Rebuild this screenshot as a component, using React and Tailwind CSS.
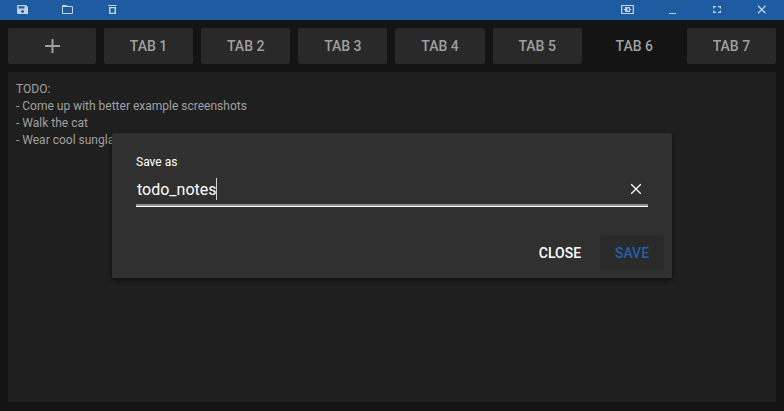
import React from "react";

const tabs = ["TAB 1", "TAB 2", "TAB 3", "TAB 4", "TAB 5", "TAB 6", "TAB 7"];

function Icon({ d, className, viewBox = "0 0 24 24" }) {
  return (
    <svg viewBox={viewBox} className={className} fill="currentColor" aria-hidden="true">
      <path d={d} fillRule="evenodd" />
    </svg>
  );
}

// Title bar glyphs, drawn on a 45x20 pixel cell.
const glyphs = {
  save: "M18 5h8l2 2v7H18a1 1 0 0 1-1-1V6a1 1 0 0 1 1-1zM18.500 6.200v2.300h6v-2.300zM22.500 10a1.500 1.500 0 1 0 .01 0z",
  open: "M63 5h3.500l1 1H72a1 1 0 0 1 1 1v6a1 1 0 0 1-1 1H63a1 1 0 0 1-1-1V6a1 1 0 0 1 1-1zM63 7v6h9V7z",
  remove: "M108 5h8.500v1.100H108zM109 7h7v7h-7zM110.500 8.300v4.400h4V8.300z",
};

function TitleButton({ name, x }) {
  return (
    <button className="flex h-5 w-[45px] items-center justify-center">
      <Icon d={glyphs[name]} viewBox={`${x} 0 45 20`} className="h-5 w-[45px]" />
    </button>
  );
}

export default function App() {
  return (
    <div className="relative flex h-[411px] w-[784px] flex-col overflow-hidden bg-[#141414] font-['Roboto',sans-serif] text-[#9f9f9f]">
      <header className="flex h-5 shrink-0 justify-between bg-[#1e5ba1] text-[#c2d3e6]">
        <div className="flex">
          <TitleButton name="save" x={0} />
          <TitleButton name="open" x={45} />
          <TitleButton name="remove" x={90} />
        </div>
        <div className="flex">
          <button className="h-5 w-[45px]">
            <Icon viewBox="605 0 45 20" className="h-5 w-[45px]" d="M621 5h13v9h-13zM622.300 6v7h10.400V6zM625 7h5v5h-5zM627.500 8.200v2.600h1.500V8.200zM623.800 9h1.200v1h-1.200zM630 9h1.200v1h-1.200z" />
          </button>
          <button className="h-5 w-[45px]">
            <Icon viewBox="650 0 45 20" className="h-5 w-[45px]" d="M669 13h7v1h-7z" />
          </button>
          <button className="h-5 w-[45px]">
            <Icon viewBox="695 0 45 20" className="h-5 w-[45px]" d="M713 6h3v1.200h-1.800V8.500h-1.200zM718 6h3v2.500h-1.200V7.200h-1.800zM713 10.500h1.200v1.300h1.800v1.200h-3zM719.800 10.500h1.200V13h-3v-1.200h1.800z" />
          </button>
          <button className="h-5 w-[44px]">
            <svg viewBox="740 0 44 20" className="h-5 w-[44px]" fill="none" stroke="currentColor" strokeWidth="1.300">
              <path d="M758 5.800l7.500 7.500M765.500 5.800l-7.500 7.500" />
            </svg>
          </button>
        </div>
      </header>

      <nav className="mx-2 mt-2 flex h-9 shrink-0 gap-2 text-sm font-medium">
        <button className="flex w-[88px] shrink-0 items-center justify-center rounded-[2px] bg-[#292929]">
          <Icon viewBox="0 0 16 16" className="size-4" d="M7.500 1h2v6H16v2H9.500v6h-2V9H1V7h6.500z" />
        </button>
        {tabs.map((tab) => (
          <button
            key={tab}
            className={`min-w-0 flex-1 rounded-[2px] leading-9 ${tab === "TAB 6" ? "" : "bg-[#292929]"}`}
          >
            {tab}
          </button>
        ))}
      </nav>

      <main className="mx-2 mt-2 h-[330px] shrink-0 whitespace-pre-line bg-[#1f1f1f] px-2 pt-[9px] text-xs leading-[17px]">
        {"TODO:\n- Come up with better example screenshots\n- Walk the cat\n- Wear cool sunglasses"}
      </main>

      <section
        role="dialog"
        className="absolute left-28 top-[133px] flex h-[145px] w-[560px] flex-col rounded-[2px] bg-[#303030] px-6 text-white shadow-[0_2px_5px_rgba(0,0,0,0.6)]"
      >
        <label className="mt-[21px] text-xs leading-[17px]">Save as</label>
        <div className="mt-[5px] flex h-[31px] items-start border-b border-white shadow-[inset_0_-2px_0_#929292]">
          <span className="ml-px mt-[3px] text-base leading-[22px]">todo_notes</span>
          <span className="-ml-px mt-[2px] h-[22px] w-px bg-[#d0d0d0]" />
          <svg viewBox="0 0 12 12" className="ml-auto mr-1.5 mt-[7px] size-3" fill="none" stroke="currentColor" strokeWidth="1.300">
            <path d="M1.200 1.200l9.600 9.600M10.800 1.200l-9.600 9.600" />
          </svg>
        </div>
        <div className="-mr-4 mt-7 flex justify-end gap-2 text-sm font-medium leading-[37px]">
          <button className="h-[35px] w-16 rounded-[2px]">CLOSE</button>
          <button className="h-[35px] w-16 rounded-[2px] bg-[#2a2a2a] text-[#2262a8]">SAVE</button>
        </div>
      </section>
    </div>
  );
}
